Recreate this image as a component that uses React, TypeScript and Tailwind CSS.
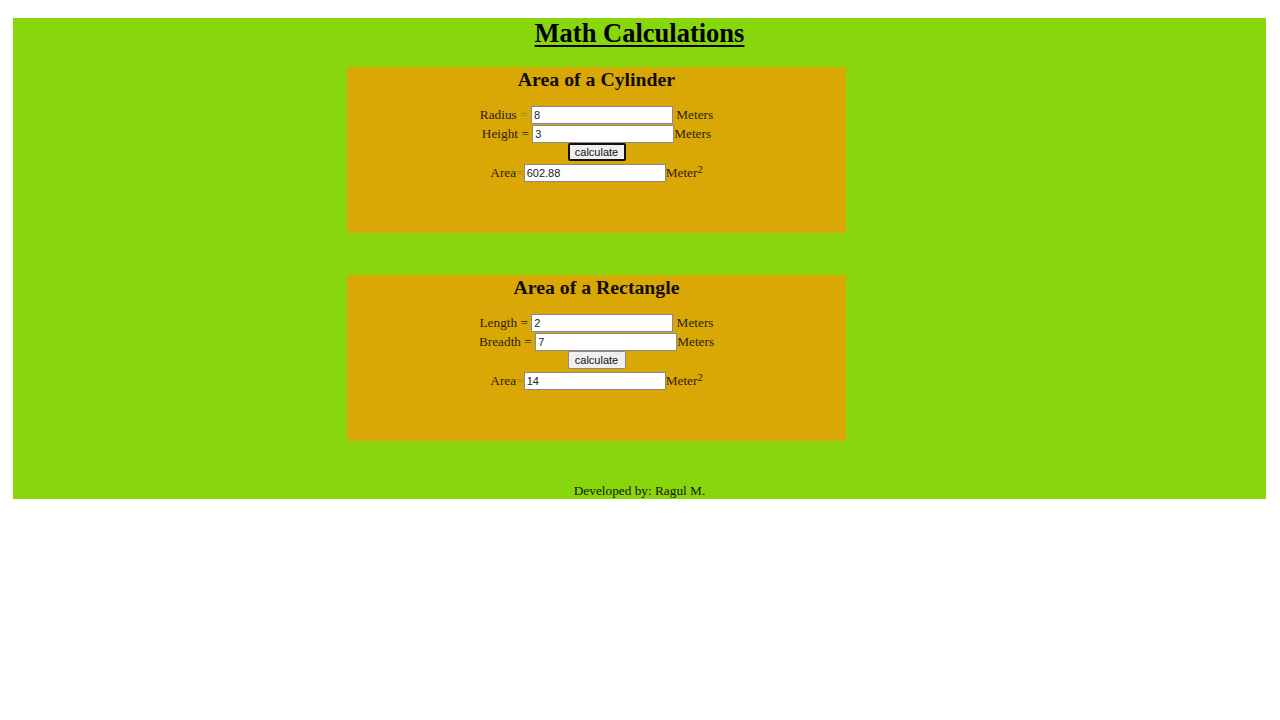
import React from "react";

const serif = "font-['Liberation_Serif','Times_New_Roman',serif]";
const sans = "font-['Liberation_Sans',Arial,sans-serif]";

type Field = { label: string; eqFaint?: boolean; value: string; spaceAfter?: boolean };

const cards = [
    {
        title: "Area of a Cylinder",
        fields: [
            { label: "Radius", eqFaint: true, value: "8", spaceAfter: true },
            { label: "Height", value: "3" },
        ] as Field[],
        area: "602.88",
        focused: true,
    },
    {
        title: "Area of a Rectangle",
        fields: [
            { label: "Length", value: "2", spaceAfter: true },
            { label: "Breadth", value: "7" },
        ] as Field[],
        area: "14",
        focused: false,
    },
];

const Input = ({ value }: { value: string }) => (
    <input
        readOnly
        value={value}
        className={`w-[142px] h-[18px] bg-white border border-[#8a8a8a] px-[2px] text-[11px] text-[#222] ${sans} outline-none`}
    />
);

export default function App() {
    return (
        <div className="min-h-[720px] bg-white pt-[18px]">
            <div className={`ml-[13px] w-[1253px] h-[481px] bg-[#88d60c] ${serif}`}>
                {/* Title */}
                <h1 className="text-center text-[26.5px] leading-[30px] font-bold underline underline-offset-[3px] decoration-[2px] text-black">
                    Math Calculations
                </h1>

                {cards.map((card, i) => (
                    <div
                        key={card.title}
                        className={`ml-[334px] w-[499px] h-[166px] bg-[#d9a806] ${i === 0 ? "mt-[19px]" : "mt-[42px]"}`}
                    >
                        <h2 className="pt-[2px] text-center text-[19.8px] leading-[20px] font-bold text-[#140c00]">
                            {card.title}
                        </h2>

                        <div className="mt-[17px] flex flex-col items-center text-[13.3px] text-[#2e2200]">
                            {card.fields.map((f, j) => (
                                <div key={f.label} className={`h-[18px] flex items-center ${j === 0 ? "mb-[1px]" : ""}`}>
                                    <span className="whitespace-pre">
                                        {f.label}{" "}
                                        <span className={f.eqFaint ? "text-[#a08530]" : ""}>=</span>{" "}
                                    </span>
                                    <Input value={f.value} />
                                    <span className="whitespace-pre">{f.spaceAfter ? " Meters" : "Meters"}</span>
                                </div>
                            ))}

                            <button
                                className={`h-[18px] w-[58px] rounded-[2px] bg-[#efefef] text-[11px] leading-none text-[#111] ${sans} ${card.focused ? "border-2 border-[#111]" : "border border-[#8a8a8a]"}`}
                            >
                                calculate
                            </button>

                            <div className="mt-[3px] h-[18px] flex items-center">
                                <span>
                                    Area<span className="text-[#a08530]">=</span>
                                </span>
                                <Input value={card.area} />
                                <span className="relative">
                                    Meter<sup className="text-[10.5px] relative -top-[4px]">2</sup>
                                </span>
                            </div>
                        </div>
                    </div>
                ))}

                {/* Footer */}
                <p className="mt-[42px] text-center text-[13.3px] leading-[15px] text-[#1a1400]">
                    Developed by: Ragul M.
                </p>
            </div>
        </div>
    );
}
